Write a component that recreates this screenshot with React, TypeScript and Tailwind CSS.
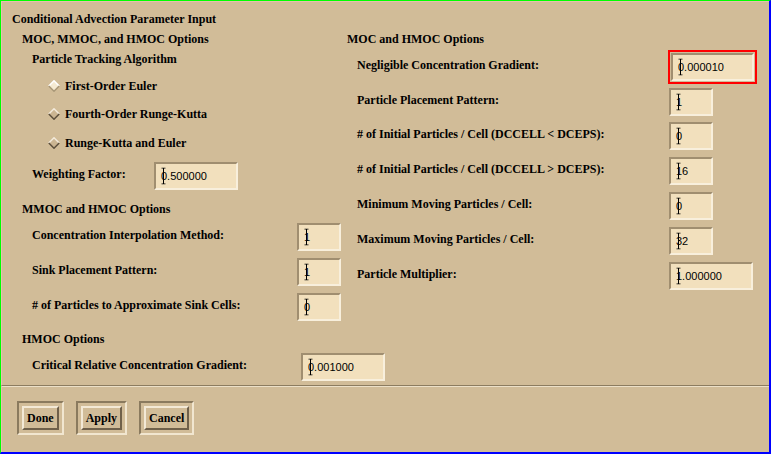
import React from "react";

const BG = "bg-[#d1bc98]";

function Cursor() {
  return (
    <svg className="absolute left-[5px] top-1/2 -translate-y-1/2" width="5" height="17" viewBox="0 0 5 17">
      <path d="M0.5 0.5h4M2.5 0.5v16M0.5 16.5h4" stroke="#000" strokeWidth="1" fill="none" />
    </svg>
  );
}

function Field({ value, w, red = false }: { value: string; w: string; red?: boolean }) {
  const inner = (
    <div
      className={`relative shrink-0 ${w} h-[28px] bg-[#f2e0bd] border-2 border-t-[#a08e70] border-l-[#a08e70] border-b-[#f8efdc] border-r-[#f8efdc] flex items-center pl-[5px] pt-[1px] font-['Liberation_Sans'] font-normal text-[11px] text-black`}
    >
      <span>{value}</span>
      <Cursor />
    </div>
  );
  if (red) {
    return <div className="shrink-0 border-2 border-[#ff0000] p-[1px]">{inner}</div>;
  }
  return inner;
}

function Diamond({ selected }: { selected?: boolean }) {
  return (
    <svg width="12" height="12" viewBox="0 0 12 12" className="shrink-0">
      <path d="M6 0.5 L11.5 6 L6 11.5 L0.5 6 Z" fill={selected ? "#f5ead2" : "#cbb592"} />
      <path d="M0.8 6 L6 0.8 L11.2 6" stroke={selected ? "#ffffff" : "#f3eadb"} strokeWidth="1.5" fill="none" />
      <path d="M0.8 6 L6 11.2 L11.2 6" stroke={selected ? "#a89676" : "#5c4f3c"} strokeWidth="1.5" fill="none" />
    </svg>
  );
}

function Button({ label }: { label: string }) {
  return (
    <div className="border-2 border-t-[#8a7a5e] border-l-[#8a7a5e] border-b-[#f1e6d0] border-r-[#f1e6d0] p-[3px]">
      <div className="border-2 border-t-[#f3e9d6] border-l-[#f3e9d6] border-b-[#6f604a] border-r-[#6f604a] px-[3px] h-[24px] flex items-center">
        {label}
      </div>
    </div>
  );
}

function Row({
  label,
  lw,
  children,
  cls,
}: {
  label: string;
  lw: string;
  children: React.ReactNode;
  cls: string;
}) {
  return (
    <div className={`flex items-center ${cls}`}>
      <span className={`${lw} shrink-0 -mt-[4px] whitespace-nowrap`}>{label}</span>
      {children}
    </div>
  );
}

export default function App() {
  return (
    <div
      className={`w-[771px] h-[454px] ${BG} border-t border-l border-t-[#00ff00] border-l-[#00ff00] border-r-2 border-b-2 border-r-[#0000ff] border-b-[#0000ff] font-['Liberation_Serif',serif] font-bold text-[12px] text-black flex flex-col overflow-hidden`}
    >
      <div className="flex-1 border-t border-l border-t-[#e6c0ad] border-l-[#e6c0ad] flex flex-col pl-[10px]">
        <div className="h-[25px] flex items-center pt-[9px]">Conditional Advection Parameter Input</div>
        <div className="flex">
          {/* left column */}
          <div className="w-[335px] shrink-0 flex flex-col">
            <div className="h-[20px] flex items-center pl-[10px] mt-[2px]">MOC, MMOC, and HMOC Options</div>
            <div className="h-[20px] flex items-center pl-[20px]">Particle Tracking Algorithm</div>
            <div className="h-[28px] flex items-center gap-[5px] pl-[36px] mt-[3px]">
              <Diamond selected />
              <span>First-Order Euler</span>
            </div>
            <div className="h-[28px] flex items-center gap-[5px] pl-[36px]">
              <Diamond />
              <span>Fourth-Order Runge-Kutta</span>
            </div>
            <div className="h-[28px] flex items-center gap-[5px] pl-[36px] mt-[1px]">
              <Diamond />
              <span>Runge-Kutta and Euler</span>
            </div>
            <Row label="Weighting Factor:" lw="w-[122px]" cls="h-[28px] pl-[20px] mt-[5px]">
              <Field value="0.500000" w="w-[84px]" />
            </Row>
            <div className="h-[20px] flex items-center pl-[10px] mt-[9px]">MMOC and HMOC Options</div>
            <Row label="Concentration Interpolation Method:" lw="w-[265px]" cls="h-[28px] pl-[20px] mt-[4px]">
              <Field value="1" w="w-[44px]" />
            </Row>
            <Row label="Sink Placement Pattern:" lw="w-[265px]" cls="h-[28px] pl-[20px] mt-[7px]">
              <Field value="1" w="w-[44px]" />
            </Row>
            <Row label="# of Particles to Approximate Sink Cells:" lw="w-[265px]" cls="h-[28px] pl-[20px] mt-[7px]">
              <Field value="0" w="w-[44px]" />
            </Row>
            <div className="h-[20px] flex items-center pl-[10px] mt-[8px]">HMOC Options</div>
            <Row label="Critical Relative Concentration Gradient:" lw="w-[269px]" cls="h-[29px] pl-[20px] mt-[3px]">
              <Field value="0.001000" w="w-[84px]" />
            </Row>
          </div>
          {/* right column */}
          <div className="flex flex-col">
            <div className="h-[20px] flex items-center mt-[2px]">MOC and HMOC Options</div>
            <Row label="Negligible Concentration Gradient:" lw="w-[311px]" cls="h-[32px] pl-[10px] mt-[2px]">
              <Field value="0.000010" w="w-[83px]" red />
            </Row>
            <Row label="Particle Placement Pattern:" lw="w-[312px]" cls="h-[28px] pl-[10px] mt-[5px]">
              <Field value="1" w="w-[44px]" />
            </Row>
            <Row label="# of Initial Particles / Cell (DCCELL < DCEPS):" lw="w-[312px]" cls="h-[28px] pl-[10px] mt-[6px]">
              <Field value="0" w="w-[44px]" />
            </Row>
            <Row label="# of Initial Particles / Cell (DCCELL > DCEPS):" lw="w-[312px]" cls="h-[28px] pl-[10px] mt-[7px]">
              <Field value="16" w="w-[44px]" />
            </Row>
            <Row label="Minimum Moving Particles / Cell:" lw="w-[312px]" cls="h-[28px] pl-[10px] mt-[7px]">
              <Field value="0" w="w-[44px]" />
            </Row>
            <Row label="Maximum Moving Particles / Cell:" lw="w-[312px]" cls="h-[28px] pl-[10px] mt-[7px]">
              <Field value="32" w="w-[44px]" />
            </Row>
            <Row label="Particle Multiplier:" lw="w-[312px]" cls="h-[28px] pl-[10px] mt-[7px]">
              <Field value="1.000000" w="w-[84px]" />
            </Row>
          </div>
        </div>
      </div>
      <div className="h-[67px] border-t border-t-[#8c7c60] border-l border-l-[#e6c0ad]">
        <div className="h-full border-t border-t-[#ece0c8] flex items-start gap-[12px] pl-[15px] pt-[14px]">
          <Button label="Done" />
          <Button label="Apply" />
          <Button label="Cancel" />
        </div>
      </div>
    </div>
  );
}
